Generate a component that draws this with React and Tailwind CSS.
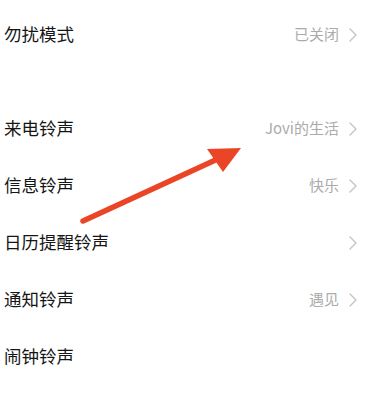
import React from 'react';

const Chevron = () => (
  <svg width="8" height="14" viewBox="0 0 8 14" className="shrink-0">
    <path d="M1 1 L7 7 L1 13" fill="none" stroke="#c4c4c4" strokeWidth="1.4" strokeLinecap="round" strokeLinejoin="round" />
  </svg>
);

const Row = ({ label, value, arrow = true }) => (
  <div className="flex items-center h-[57px] pl-[4px] pr-[13px]">
    <span className="flex-1 text-[17.5px] text-[#151515]">{label}</span>
    {value && <span className="text-[15px] text-[#ababab] mr-[10px]">{value}</span>}
    {arrow && <Chevron />}
  </div>
);

export default function App() {
  return (
    <div
      className="relative w-[370px] h-[393px] bg-white overflow-hidden pt-[6px]"
      style={{ fontFamily: '"Noto Sans CJK SC", "Noto Sans", sans-serif' }}
    >
      <Row label="勿扰模式" value="已关闭" />
      <div className="h-[37px]" />
      <Row label="来电铃声" value="Jovi的生活" />
      <Row label="信息铃声" value="快乐" />
      <Row label="日历提醒铃声" />
      <Row label="通知铃声" value="遇见" />
      <Row label="闹钟铃声" arrow={false} />

      {/* annotation arrow */}
      <svg className="absolute inset-0 pointer-events-none" width="370" height="393" viewBox="0 0 370 393">
        <line x1="83" y1="221" x2="222" y2="157" stroke="#ea4526" strokeWidth="5.5" strokeLinecap="round" />
        <polygon points="207,149 241,148 223,172" fill="#ea4526" />
      </svg>
    </div>
  );
}
